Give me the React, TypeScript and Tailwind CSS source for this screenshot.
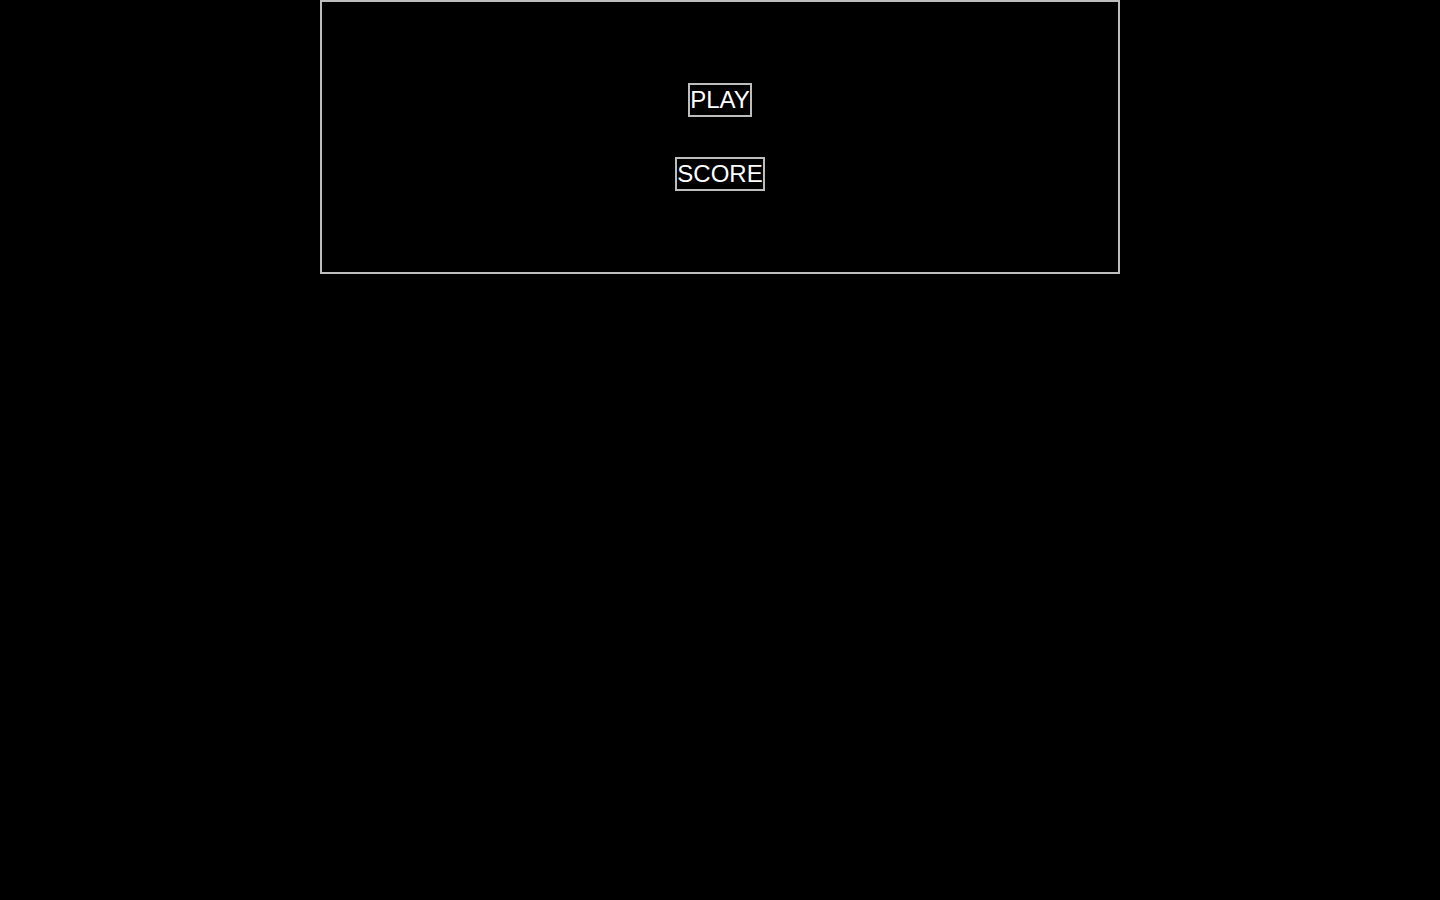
export default function App() {
  return (
    <main className="min-h-screen bg-black font-['Liberation_Sans',Arial,sans-serif]">
      <div className="mx-auto flex h-[274px] w-[800px] flex-col items-center justify-center gap-[40px] border-2 border-[#bdbdbd] bg-black">
        <button
          type="button"
          className="border-2 border-[#bdbdbd] bg-black px-0 text-[24px] leading-[30px] text-white"
        >
          PLAY
        </button>
        <button
          type="button"
          className="border-2 border-[#bdbdbd] bg-black px-0 text-[24px] leading-[30px] text-white"
        >
          SCORE
        </button>
      </div>
    </main>
  );
}
